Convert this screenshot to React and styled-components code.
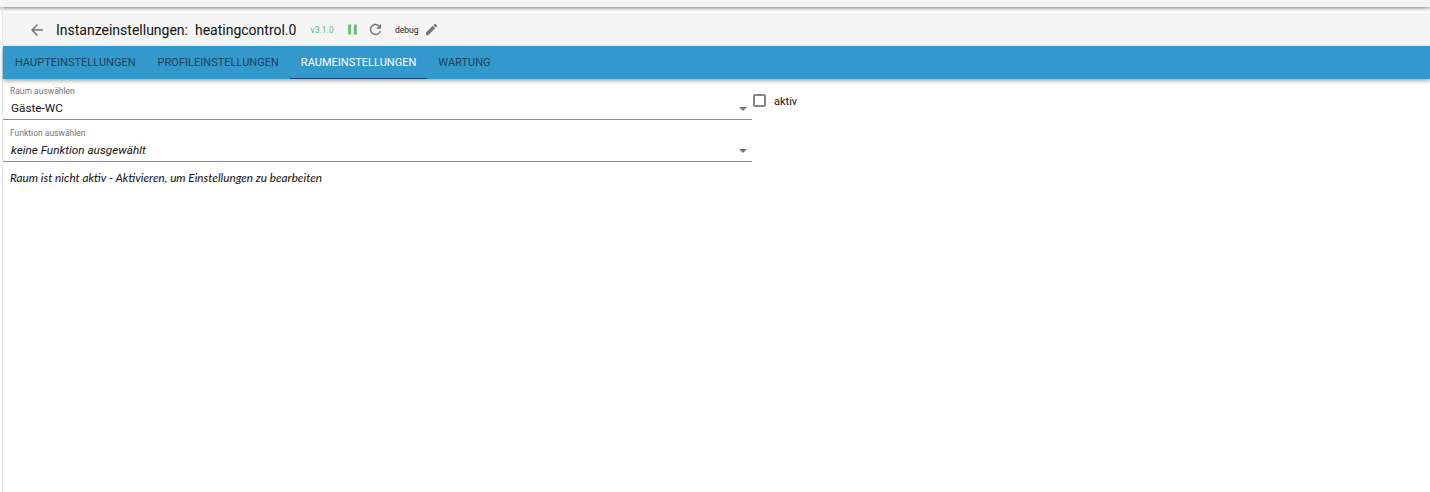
import React from 'react'
import styled, { createGlobalStyle } from 'styled-components'

const GlobalStyle = createGlobalStyle`
  html, body {
    margin: 0;
    padding: 0;
    height: 100%;
    overflow: hidden;
    background: #fff;
    font-family: Roboto, "Liberation Sans", sans-serif;
  }
`

const TopStrip = styled.div`
  height: 7px;
  background: #f4f4f4;
  box-shadow: 0 1px 4px rgba(0, 0, 0, 0.55);
`

const Page = styled.div`
  height: 485px;
  margin-left: 2px;
  padding-top: 6px;
  border-left: 1px solid #e6e6e6;
  box-sizing: border-box;
`

const Header = styled.header`
  height: 33px;
  background: #f5f5f5;
  display: flex;
  align-items: center;
  padding-left: 25px;
`

const IconSlot = styled.svg`
  display: block;
  width: ${props => props.size || 18}px;
  height: ${props => props.size || 18}px;
  fill: ${props => props.color || '#757575'};
  flex: none;
  margin-left: ${props => props.offset || 0}px;
`

const Title = styled.h1`
  margin: 0 0 0 10px;
  font-size: 14px;
  font-weight: 400;
  color: #111;
  white-space: pre;
`

const Version = styled.span`
  margin-left: 14px;
  font-size: 8.5px;
  letter-spacing: 0.1px;
  color: #66bb6a;
`

const LogLevel = styled.span`
  margin-left: 11px;
  font-size: 8.5px;
  color: #222;
`

const TabBar = styled.nav`
  height: 33px;
  padding-left: 1px;
  background: #3399cc;
  display: flex;
  box-shadow: 0 2px 4px rgba(0, 0, 0, 0.35);
`

const Tab = styled.div`
  display: flex;
  align-items: center;
  padding: 0 11px;
  font-size: 11px;
  letter-spacing: 0.02px;
  color: ${props => (props.active ? '#fff' : '#1f3f55')};
  box-shadow: ${props => (props.active ? 'inset 0 -1px 0 #164477' : 'none')};
`

const Content = styled.main`
  display: flex;
  align-items: flex-start;
  padding-top: 5px;
`

const Fields = styled.div`
  width: 749px;
  display: flex;
  flex-direction: column;
  gap: 6px;
`

const Field = styled.div`
  height: 36px;
  box-sizing: border-box;
  border-bottom: 1px solid #8c8c8c;
  padding: 2px 0 0 7px;
  position: relative;
`

const Label = styled.div`
  font-size: 8.5px;
  line-height: 11px;
  color: #757575;
`

const Value = styled.div`
  margin: 3px 0 0 1px;
  font-size: 11.75px;
  line-height: 16px;
  color: #111;
  font-style: ${props => (props.italic ? 'italic' : 'normal')};
`

const Caret = styled.span`
  position: absolute;
  right: 5px;
  bottom: 8px;
  width: 0;
  height: 0;
  border-left: 4px solid transparent;
  border-right: 4px solid transparent;
  border-top: 4px solid #757575;
`

const Hint = styled.p`
  margin: 3px 0 0 7px;
  font-family: Lato, "Open Sans", sans-serif;
  font-style: italic;
  font-size: 11.75px;
  line-height: 14px;
  color: #111;
`

const CheckRow = styled.label`
  display: flex;
  align-items: center;
  margin-top: 9px;
  margin-left: 1px;
  height: 14px;
`

const CheckBox = styled.span`
  width: 13px;
  height: 13px;
  box-sizing: border-box;
  border: 2px solid #858585;
  border-radius: 2px;
`

const CheckLabel = styled.span`
  margin-left: 8px;
  padding-top: 2px;
  font-size: 11px;
  color: #111;
`

const BackIcon = () => (
  <IconSlot viewBox="0 0 24 24">
    <path d="M20 11H7.83l5.59-5.59L12 4l-8 8 8 8 1.41-1.41L7.83 13H20v-2z" />
  </IconSlot>
)

const PauseIcon = () => (
  <IconSlot viewBox="0 0 24 24" color="#66bb6a" size={17} offset={10}>
    <path d="M6 19h4V5H6v14zm8-14v14h4V5h-4z" />
  </IconSlot>
)

const ReloadIcon = () => (
  <IconSlot viewBox="0 0 24 24" size={17} offset={6}>
    <path d="M17.65 6.35A7.958 7.958 0 0 0 12 4c-4.42 0-7.99 3.58-7.99 8s3.57 8 7.99 8c3.73 0 6.84-2.55 7.73-6h-2.08A5.99 5.99 0 0 1 12 18c-3.31 0-6-2.69-6-6s2.69-6 6-6c1.66 0 3.14.69 4.22 1.78L13 11h7V4l-2.35 2.35z" />
  </IconSlot>
)

const EditIcon = () => (
  <IconSlot viewBox="0 0 24 24" size={15} offset={5}>
    <path d="M3 17.25V21h3.75L17.81 9.94l-3.75-3.75L3 17.25zM20.71 7.04a.996.996 0 0 0 0-1.41l-2.34-2.34a.996.996 0 0 0-1.41 0l-1.83 1.83 3.75 3.75 1.83-1.83z" />
  </IconSlot>
)

const tabs = ['HAUPTEINSTELLUNGEN', 'PROFILEINSTELLUNGEN', 'RAUMEINSTELLUNGEN', 'WARTUNG']

const App = () => (
  <>
    <GlobalStyle />
    <TopStrip />
    <Page>
      <Header>
        <BackIcon />
        <Title>Instanzeinstellungen:  heatingcontrol.0</Title>
        <Version>v3.1.0</Version>
        <PauseIcon />
        <ReloadIcon />
        <LogLevel>debug</LogLevel>
        <EditIcon />
      </Header>
      <TabBar>
        {tabs.map(tab => (
          <Tab key={tab} active={tab === 'RAUMEINSTELLUNGEN'}>
            {tab}
          </Tab>
        ))}
      </TabBar>
      <Content>
        <Fields>
          <Field>
            <Label>Raum auswählen</Label>
            <Value>Gäste-WC</Value>
            <Caret />
          </Field>
          <Field>
            <Label>Funktion auswählen</Label>
            <Value italic>keine Funktion ausgewählt</Value>
            <Caret />
          </Field>
          <Hint>Raum ist nicht aktiv - Aktivieren, um Einstellungen zu bearbeiten</Hint>
        </Fields>
        <CheckRow>
          <CheckBox />
          <CheckLabel>aktiv</CheckLabel>
        </CheckRow>
      </Content>
    </Page>
  </>
)

export default App
